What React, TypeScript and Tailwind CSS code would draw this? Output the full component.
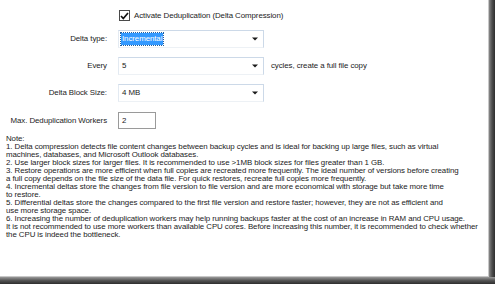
const noteLines = [
  'Note:',
  '1. Delta compression detects file content changes between backup cycles and is ideal for backing up large files, such as virtual',
  'machines, databases, and Microsoft Outlook databases.',
  '2. Use larger block sizes for larger files. It is recommended to use >1MB block sizes for files greater than 1 GB.',
  '3. Restore operations are more efficient when full copies are recreated more frequently. The ideal number of versions before creating',
  'a full copy depends on the file size of the data file. For quick restores, recreate full copies more frequently.',
  '4. Incremental deltas store the changes from file version to file version and are more economical with storage but take more time',
  'to restore.',
  '5. Differential deltas store the changes compared to the first file version and restore faster; however, they are not as efficient and',
  'use more storage space.',
  '6. Increasing the number of deduplication workers may help running backups faster at the cost of an increase in RAM and CPU usage.',
  'It is not recommended to use more workers than available CPU cores. Before increasing this number, it is recommended to check whether',
  'the CPU is indeed the bottleneck.',
];

function Arrow() {
  return (
    <svg width="6" height="4" viewBox="0 0 6 4" className="shrink-0">
      <path d="M0 0.5h6L3 3.5z" fill="#1a1a1a" />
    </svg>
  );
}

function Combo({ children }: { children: React.ReactNode }) {
  return (
    <div className="flex h-[18px] w-[146px] items-center justify-between border border-[#ccd9e8] border-l-[#e3eaf2] border-b-[#edf1f5] bg-white pl-[2px] pr-[5px]">
      <div className="flex items-center">{children}</div>
      <Arrow />
    </div>
  );
}

function Row({ label, children }: { label: string; children: React.ReactNode }) {
  return (
    <div className="mt-[9px] flex items-center">
      <div className="w-[107px] shrink-0 whitespace-nowrap text-right">{label}</div>
      <div className="ml-[11px] flex items-center">{children}</div>
    </div>
  );
}

export default function App() {
  return (
    <div className="flex h-[284px] w-[495px] flex-col font-['Liberation_Sans',Arial,sans-serif] text-[7.9px] leading-[8px] tracking-[-0.08px] text-[#1c1c1c]">
      <div className="flex min-h-0 flex-1">
        <div className="flex-1 border-r border-b border-[#c8c8c8] bg-white pt-[10px]">
          {/* Checkbox */}
          <div className="flex items-center pl-[119px]">
            <div className="flex h-[11px] w-[11px] items-center justify-center border border-[#4a4a4a] bg-white">
              <svg width="9" height="8" viewBox="0 0 9 8">
                <path d="M1 4l2.3 2.5L8 1" stroke="#111" strokeWidth="1.7" fill="none" />
              </svg>
            </div>
            <span className="ml-[4px] whitespace-nowrap">Activate Deduplication (Delta Compression)</span>
          </div>

          <div className="mt-[6px]">
            <Row label="Delta type:">
              <Combo>
                <span className="bg-[#3399ff] px-[1px] py-[2px] leading-[8px] text-white outline-1 outline-dotted outline-[#1f5fa0]">Incremental</span>
              </Combo>
            </Row>
          </div>

          <Row label="Every">
            <Combo>
              <span className="pl-[1px]">5</span>
            </Combo>
            <span className="ml-[7px] whitespace-nowrap">cycles, create a full file copy</span>
          </Row>

          <Row label="Delta Block Size:">
            <Combo>
              <span className="pl-[1px]">4 MB</span>
            </Combo>
          </Row>

          <div className="mt-[10px] flex items-center">
            <div className="w-[107px] shrink-0 whitespace-nowrap text-right">Max. Deduplication Workers</div>
            <div className="ml-[11px] flex h-[17px] w-[38px] items-center border border-[#9a9a9a] bg-white pl-[3px]">2</div>
          </div>

          <div className="mt-[6px] pl-[6px]">
            {noteLines.map((line, i) => (
              <div key={i} className="whitespace-nowrap">
                {line}
              </div>
            ))}
          </div>
        </div>
        <div className="w-[6px] bg-gradient-to-r from-[#8a8a8a] via-[#4e4e4e] to-[#2e2e2e]" />
      </div>
      <div className="h-[7px] bg-gradient-to-b from-[#9a9a9a] via-[#555] to-[#2e2e2e]" />
    </div>
  );
}
